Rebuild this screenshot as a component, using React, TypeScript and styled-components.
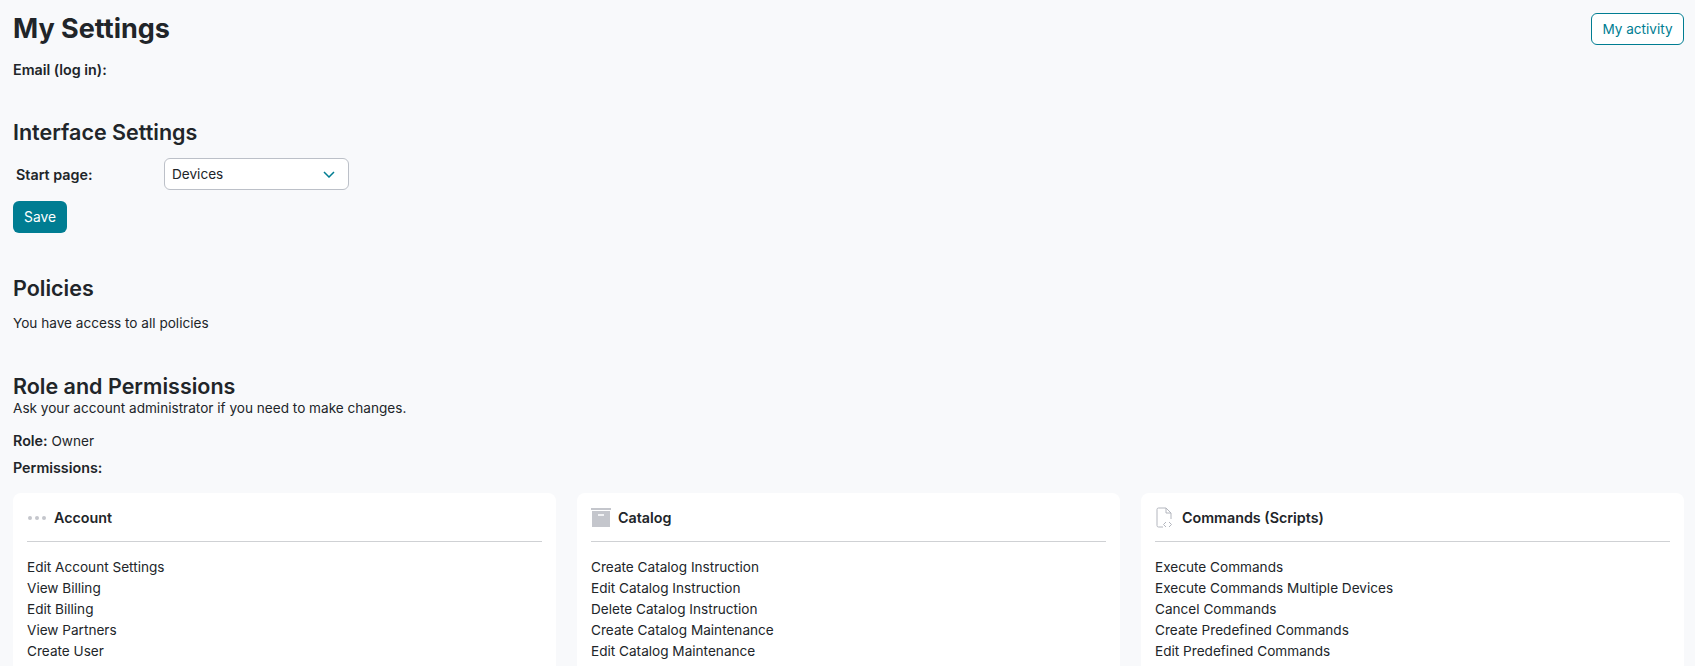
import React from "react";
import styled, { createGlobalStyle } from "styled-components";

const GlobalStyle = createGlobalStyle`
  html, body {
    margin: 0;
    padding: 0;
    height: 666px;
    overflow: hidden;
    background: #f8f9fb;
    color: #212529;
    font-family: Inter, "Noto Sans", sans-serif;
    font-size: 13.6px;
  }
`;

const Page = styled.main`
  padding: 12px 11px 0 13px;
`;

const TopRow = styled.div`
  display: flex;
  justify-content: space-between;
  align-items: flex-start;
  height: 47px;
`;

const Title = styled.h1`
  margin: 0;
  font-size: 27px;
  line-height: 34px;
  font-weight: 700;
`;

const ActivityButton = styled.button`
  height: 32px;
  width: 93px;
  margin-top: 1px;
  padding: 0;
  border: 1px solid #007d92;
  border-radius: 6px;
  background: #fff;
  color: #007d92;
  font: 400 13.6px Inter, sans-serif;
`;

const Line = styled.div<{ $top?: number }>`
  margin-top: ${(p) => p.$top ?? 0}px;
  line-height: 21px;
`;

const Strong = styled.b`
  font-size: 14.3px;
  font-weight: 600;
`;

const SectionTitle = styled.h2<{ $top: number }>`
  margin: ${(p) => p.$top}px 0 0;
  font-size: 21.5px;
  line-height: 28px;
  font-weight: 600;
`;

const FormRow = styled.div`
  display: flex;
  align-items: center;
  margin-top: 12px;
  padding-left: 3px;
`;

const FormLabel = styled.label`
  width: 148px;
  font-weight: 600;
  font-size: 14.3px;
`;

const SelectBox = styled.div`
  box-sizing: border-box;
  display: flex;
  align-items: center;
  justify-content: space-between;
  width: 185px;
  height: 32px;
  padding: 0 13px 0 7px;
  background: #fff;
  border: 1px solid #bcc0c8;
  border-radius: 6px;
`;

const SaveButton = styled.button`
  display: block;
  width: 54px;
  height: 32px;
  margin-top: 11px;
  padding: 0;
  border: 0;
  border-radius: 6px;
  background: #007d92;
  color: #fff;
  font: 400 13.8px Inter, sans-serif;
`;

const CardGrid = styled.div`
  display: grid;
  grid-template-columns: repeat(3, 543px);
  gap: 21px;
  margin-top: 14px;
`;

const Card = styled.section`
  height: 300px;
  padding: 0 14px;
  background: #fff;
  border-radius: 8px;
`;

const CardHeader = styled.header`
  box-sizing: border-box;
  display: flex;
  align-items: center;
  height: 49px;
  padding-top: 1px;
  border-bottom: 1px solid #cfd1d4;
  font-size: 14.3px;
  font-weight: 600;
`;

const IconSlot = styled.span`
  display: flex;
  align-items: center;
  justify-content: center;
  width: 20px;
  margin-right: 7px;
`;

const PermissionList = styled.ul`
  list-style: none;
  margin: 15px 0 0;
  padding: 0;
  line-height: 21px;
`;

const DotsIcon = () => (
  <svg width="20" height="6" viewBox="0 0 20 6" fill="#c4c6cc">
    <circle cx="3" cy="3" r="2" />
    <circle cx="10" cy="3" r="2" />
    <circle cx="17" cy="3" r="2" />
  </svg>
);

const BoxIcon = () => (
  <svg width="20" height="19" viewBox="0 0 20 19">
    <rect x="0" y="0" width="20" height="2" fill="#c4c6cc" />
    <rect x="1" y="3" width="18" height="16" fill="#c4c6cc" />
    <rect x="7" y="6" width="6" height="2" fill="#f1f2f4" />
  </svg>
);

const ScriptIcon = () => (
  <svg width="20" height="21" viewBox="0 0 20 21" fill="none" stroke="#b3b6be" strokeWidth="1">
    <path d="M8 20H3.500A1.500 1.500 0 0 1 2 18.500v-16A1.500 1.500 0 0 1 3.500 1H11l5 5v6" />
    <path d="M11 1v5h5" />
    <path d="M11 15l-2.500 2.500L11 20M14 15l2.500 2.500L14 20" />
  </svg>
);

const ChevronIcon = () => (
  <svg width="12" height="7" viewBox="0 0 12 7" fill="none" stroke="#007d92" strokeWidth="1.5">
    <path d="M1 1l5 5 5-5" />
  </svg>
);

const cards = [
  {
    title: "Account",
    icon: <DotsIcon />,
    items: ["Edit Account Settings", "View Billing", "Edit Billing", "View Partners", "Create User"],
  },
  {
    title: "Catalog",
    icon: <BoxIcon />,
    items: [
      "Create Catalog Instruction",
      "Edit Catalog Instruction",
      "Delete Catalog Instruction",
      "Create Catalog Maintenance",
      "Edit Catalog Maintenance",
    ],
  },
  {
    title: "Commands (Scripts)",
    icon: <ScriptIcon />,
    items: [
      "Execute Commands",
      "Execute Commands Multiple Devices",
      "Cancel Commands",
      "Create Predefined Commands",
      "Edit Predefined Commands",
    ],
  },
];

export default function App() {
  return (
    <>
      <GlobalStyle />
      <Page>
        <TopRow>
          <Title>My Settings</Title>
          <ActivityButton>My activity</ActivityButton>
        </TopRow>
        <Line>
          <Strong>Email (log in):</Strong>
        </Line>

        <SectionTitle $top={37}>Interface Settings</SectionTitle>
        <FormRow>
          <FormLabel>Start page:</FormLabel>
          <SelectBox>
            Devices
            <ChevronIcon />
          </SelectBox>
        </FormRow>
        <SaveButton>Save</SaveButton>

        <SectionTitle $top={41}>Policies</SectionTitle>
        <Line $top={11}>You have access to all policies</Line>

        <SectionTitle $top={38}>Role and Permissions</SectionTitle>
        <Line $top={-2}>Ask your account administrator if you need to make changes.</Line>
        <Line $top={11}>
          <Strong>Role:</Strong> Owner
        </Line>
        <Line $top={5}>
          <Strong>Permissions:</Strong>
        </Line>

        <CardGrid>
          {cards.map((card) => (
            <Card key={card.title}>
              <CardHeader>
                <IconSlot>{card.icon}</IconSlot>
                {card.title}
              </CardHeader>
              <PermissionList>
                {card.items.map((item) => (
                  <li key={item}>{item}</li>
                ))}
              </PermissionList>
            </Card>
          ))}
        </CardGrid>
      </Page>
    </>
  );
}
